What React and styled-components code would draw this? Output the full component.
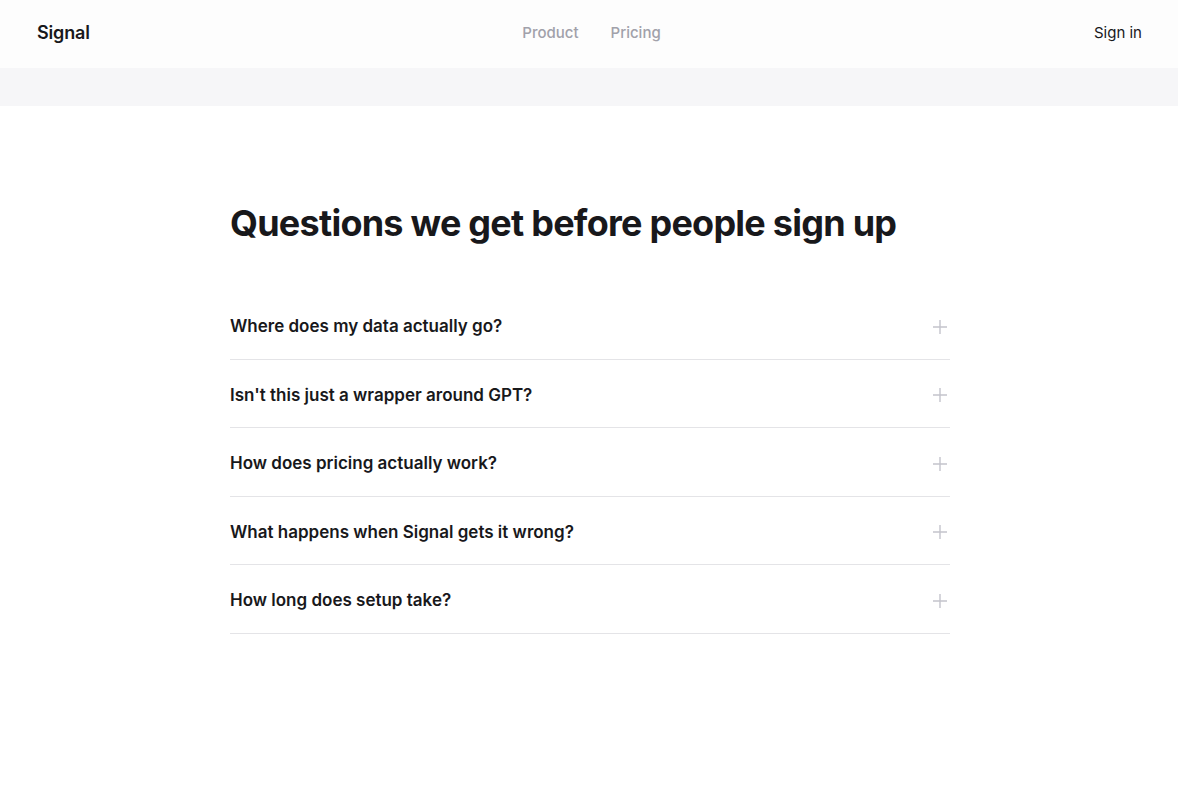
import React from 'react'
import styled, { createGlobalStyle } from 'styled-components'

const Global = createGlobalStyle`
  body {
    margin: 0;
    background: #ffffff;
    font-family: Inter, "Noto Sans", sans-serif;
    color: #18181b;
  }
`

const questions = [
  'Where does my data actually go?',
  "Isn't this just a wrapper around GPT?",
  'How does pricing actually work?',
  'What happens when Signal gets it wrong?',
  'How long does setup take?',
]

const Plus = () => (
  <svg width="14" height="14" viewBox="0 0 14 14" fill="none">
    <path d="M7 0v14M0 7h14" stroke="#c4c4cc" strokeWidth="1.4" />
  </svg>
)

const App = () => {
  return (
    <>
      <Global />
      <S_Header>
        <div className="logo">Signal</div>
        <nav>
          <a>Product</a>
          <a>Pricing</a>
        </nav>
        <a className="signin">Sign in</a>
      </S_Header>
      <Band />
      <S_Main>
        <S_Faq>
          <h2>Questions we get before people sign up</h2>
          <ul>
            {questions.map((q) => (
              <Row key={q}>
                <span>{q}</span>
                <Plus />
              </Row>
            ))}
          </ul>
        </S_Faq>
      </S_Main>
    </>
  )
}

const S_Header = styled.header`
  height: 64px;
  background: #fdfdfd;
  display: grid;
  grid-template-columns: 1fr auto 1fr;
  align-items: center;
  padding: 0 36px 4px 37px;

  .logo {
    font-size: 18px;
    font-weight: 600;
    letter-spacing: -0.01em;
  }

  nav {
    display: flex;
    gap: 32px;
    margin-left: 4px;
  }

  nav a {
    font-size: 15px;
    font-weight: 500;
    color: #a1a1aa;
  }

  .signin {
    justify-self: end;
    font-size: 15px;
    color: #18181b;
  }
`

const Band = styled.div`
  height: 38px;
  background: #f6f6f8;
`

const S_Main = styled.main`
  padding: 96px 0 0 2px;
`

const S_Faq = styled.section`
  width: 720px;
  margin: 0 auto;

  h2 {
    margin: 0 0 46px;
    font-size: 36px;
    line-height: 1.2;
    font-weight: 700;
    letter-spacing: -0.021em;
    color: #18181b;
  }

  ul {
    list-style: none;
    margin: 0;
    padding: 0;
  }
`

const Row = styled.li`
  display: flex;
  align-items: center;
  justify-content: space-between;
  padding: 26px 3px 22px 0;
  border-bottom: 1px solid #e4e4e7;
  font-size: 17px;
  line-height: 19.5px;
  font-weight: 600;
  color: #18181b;
`

export default App
